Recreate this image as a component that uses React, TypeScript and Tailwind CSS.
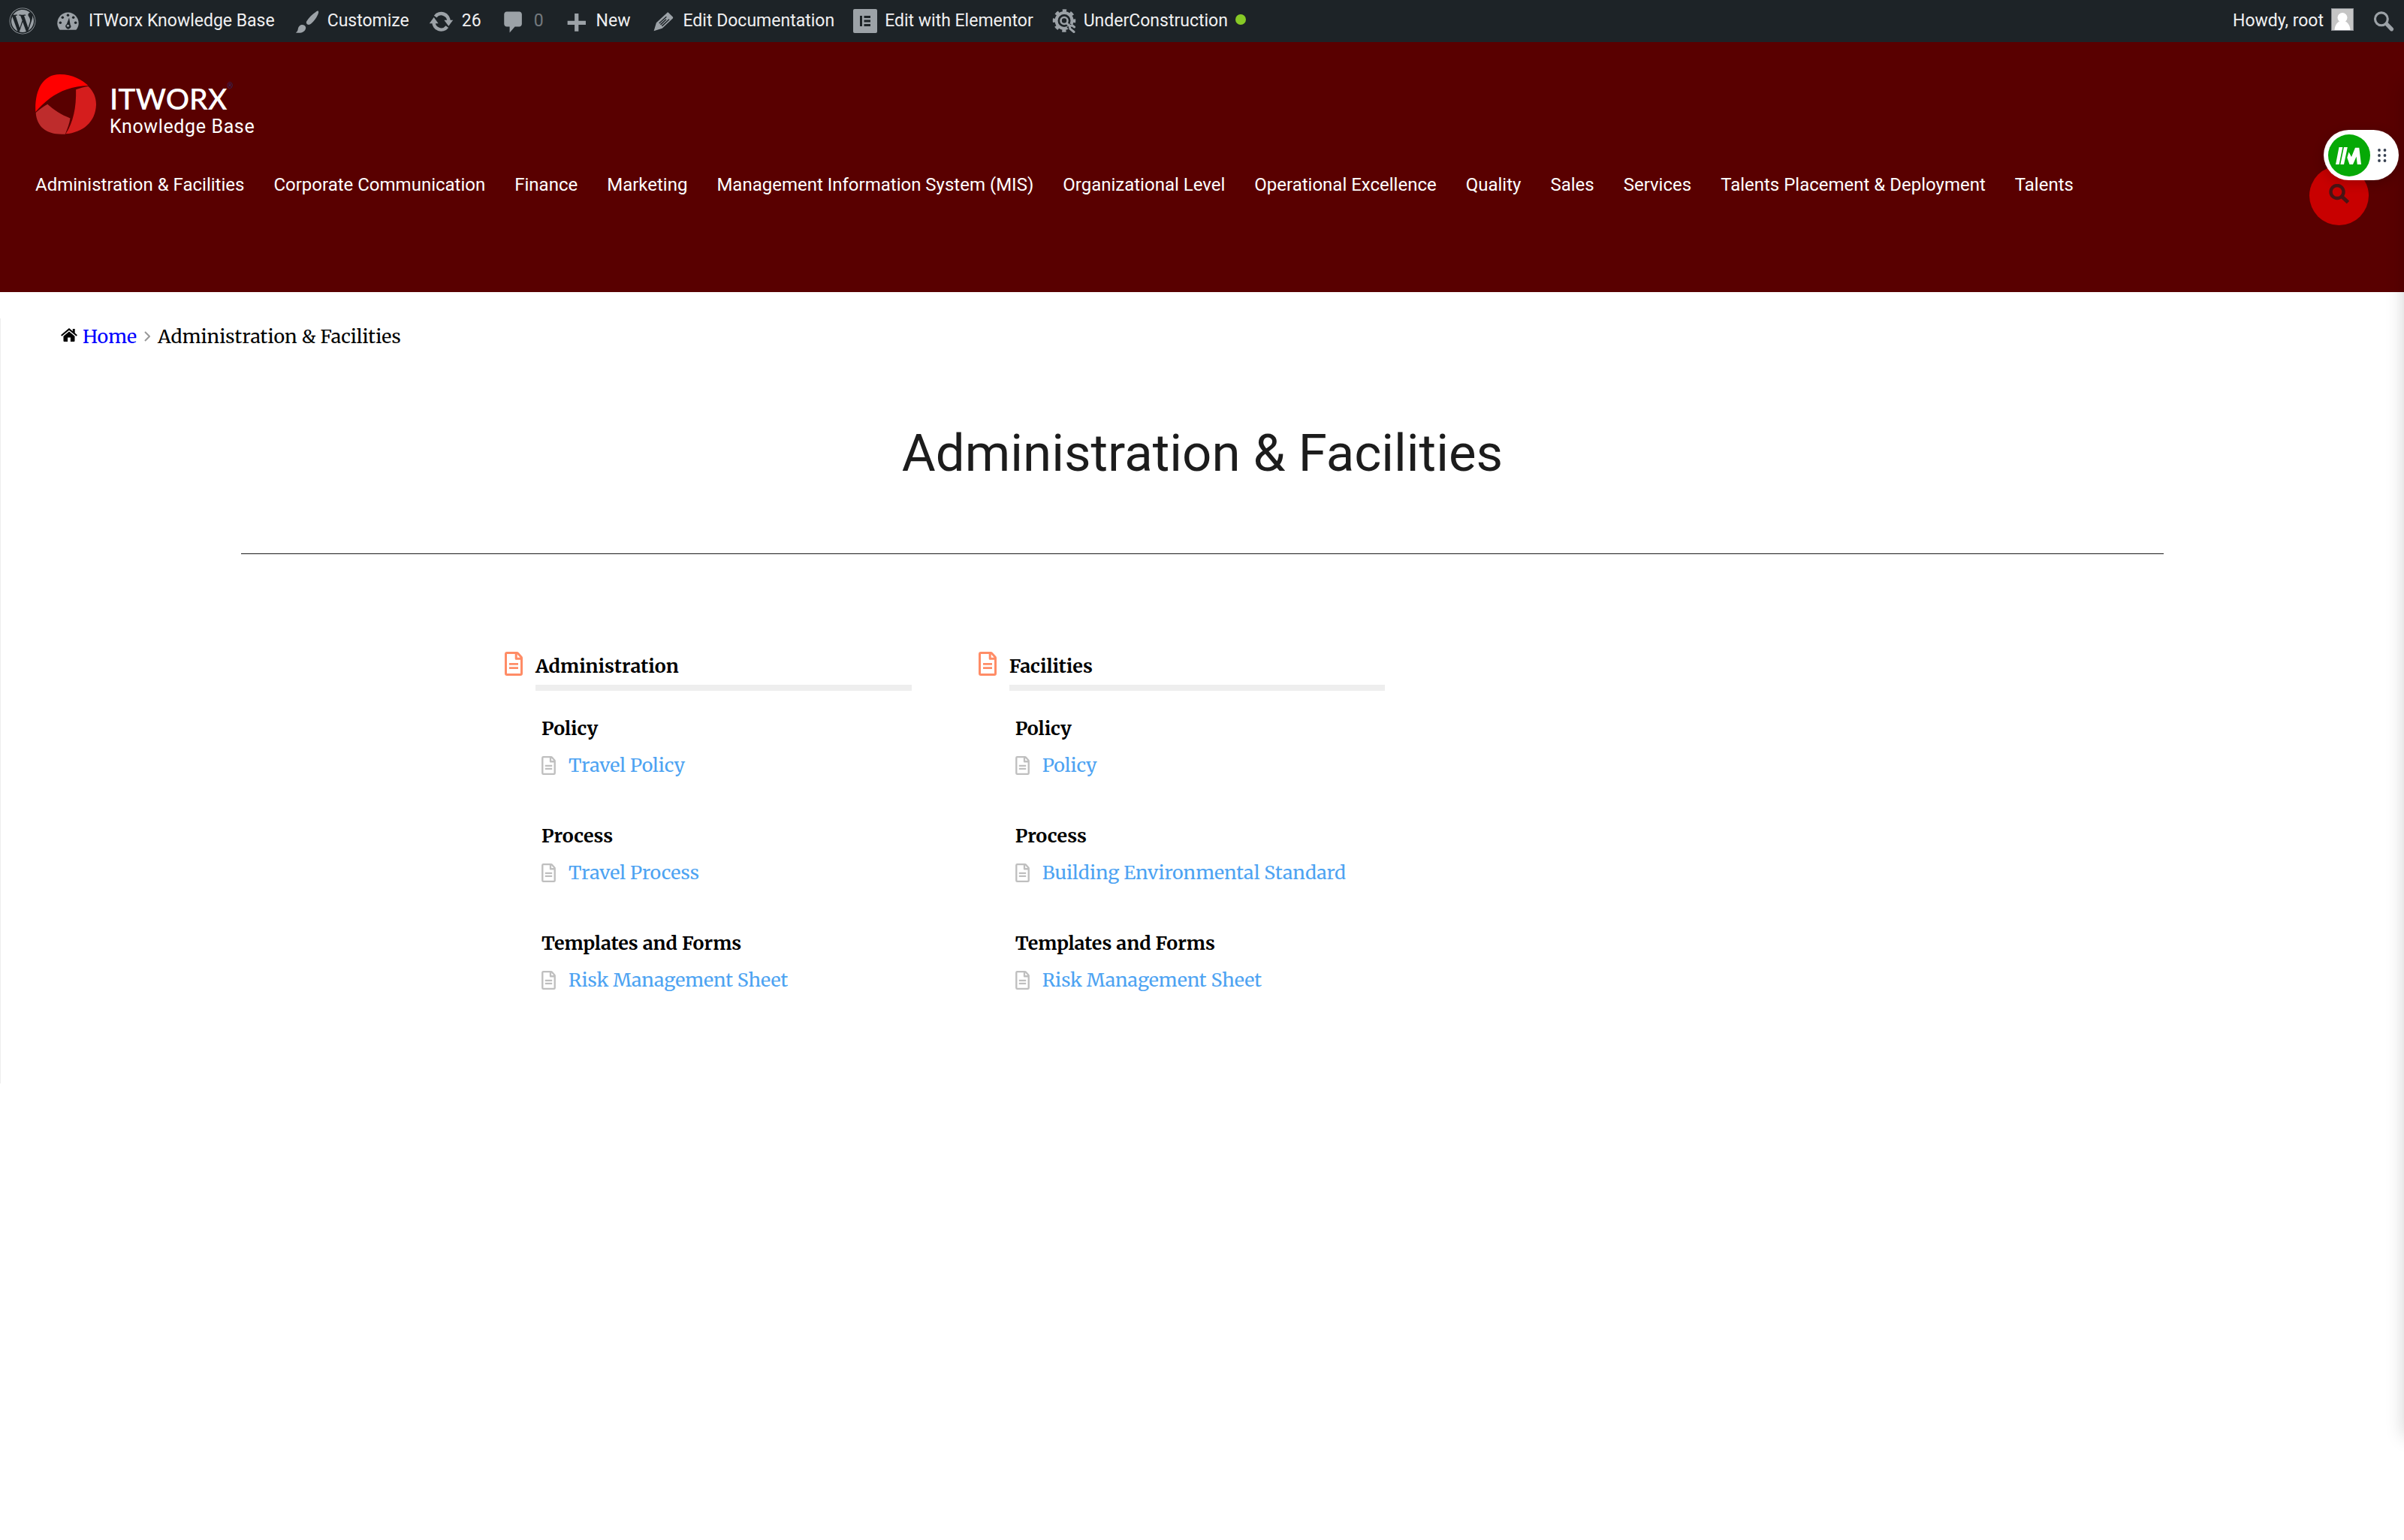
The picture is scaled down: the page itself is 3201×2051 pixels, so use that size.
import React from 'react';
import { FaWordpress } from 'react-icons/fa';

type IconProps = { className?: string };

const GaugeIcon = ({ className = '' }: IconProps) => (
  <svg viewBox="0 0 20 20" className={className} fill="currentColor" aria-hidden="true">
    <path d="M3.8 16.4h12.4c1.100-1.400 1.900-3 1.900-4.900 0-4.600-3.600-8.300-8.100-8.300s-8.100 3.700-8.100 8.300c0 1.900.8 3.500 1.900 4.900z" />
    <g fill="#1d2327">
      <circle cx="10" cy="5.300" r="1" />
      <circle cx="5.900" cy="7" r="1" />
      <circle cx="14.100" cy="7" r="1" />
      <circle cx="4.200" cy="11" r="1" />
      <circle cx="15.800" cy="11" r="1" />
      <path d="M10.900 7.200l.9 5.300a2 2 0 1 1-2.800-.4z" />
    </g>
    <circle cx="10" cy="13.300" r=".9" />
  </svg>
);

const BrushIcon = ({ className = '' }: IconProps) => (
  <svg viewBox="0 0 20 20" className={className} fill="currentColor" aria-hidden="true">
    <path d="M18.700 2.200c.5.500.2 1.500-.3 2.700-1.200 2.700-3.500 6-6 7.400-.7.400-1.500.3-2.200-.2-.6-.6-.8-1.400-.3-2.200 1.500-2.600 4.400-5.500 6.900-7.100.9-.6 1.500-1 1.900-.6z" />
    <path d="M8.900 13.700c.7 1 .3 2.400-.6 3.400-1.500 1.700-4.200 1.800-6.700 1.400 1.500-.8 1.500-1.900 1.800-3.200.4-1.400 1.300-2.400 2.700-2.700 1.100-.2 2.200.2 2.800 1.100z" />
  </svg>
);

const UpdateIcon = ({ className = '' }: IconProps) => (
  <svg viewBox="0 0 20 20" className={className} fill="currentColor" aria-hidden="true">
    <g fill="none" stroke="currentColor" strokeWidth="2.600">
      <path d="M5.500 6.300A5.700 5.700 0 0 1 15.700 10" />
      <path d="M14.500 14.100A5.700 5.700 0 0 1 4.300 10.400" />
    </g>
    <path d="M12.200 9h6.800l-3.400 4.600z" />
    <path d="M1 11.500h6.800L4.400 6.900z" />
  </svg>
);

const CommentIcon = ({ className = '' }: IconProps) => (
  <svg viewBox="0 0 20 20" className={className} fill="currentColor" aria-hidden="true">
    <path d="M5 2.500h9.500c1.100 0 2 .9 2 2V12c0 1.100-.9 2-2 2h-3.300l-4 4.600V14H5c-1.100 0-2-.9-2-2V4.500c0-1.100.9-2 2-2z" />
  </svg>
);

const PlusIcon = ({ className = '' }: IconProps) => (
  <svg viewBox="0 0 20 20" className={className} fill="currentColor" aria-hidden="true">
    <path d="M9.200 4h3v5.500h5.500v3h-5.500V17.500h-3v-5H3.800v-3h5.400z" />
  </svg>
);

const PencilIcon = ({ className = '' }: IconProps) => (
  <svg viewBox="0 0 20 20" className={className} aria-hidden="true">
    <path fill="currentColor" d="M13.300 3.400c.3-.3.800-.3 1.100 0l3.200 3.200c.3.300.3.800 0 1.100l-8 7.600-6.400 2 1.900-6.300z" />
    <path stroke="#1d2327" strokeWidth=".8" fill="none" d="M7.300 11.400l5.500-5M9.400 13.500l5.500-5.100M8.300 12.500l4.300-4.100" />
  </svg>
);

const ElementorIcon = ({ className = '' }: IconProps) => (
  <svg viewBox="0 0 32 32" className={className} aria-hidden="true">
    <rect width="32" height="32" rx="2" fill="currentColor" />
    <path fill="#1d2327" d="M9 9h3v14H9zM14.500 9H23v3h-8.500zM14.500 14.500H23v3h-8.500zM14.500 20H23v3h-8.500z" />
  </svg>
);

const GearIcon = ({ className = '' }: IconProps) => (
  <svg viewBox="0 0 32 32" className={className} fill="none" stroke="currentColor" aria-hidden="true">
    <circle cx="16" cy="15.500" r="10.500" strokeWidth="4" />
    <circle cx="16" cy="15.500" r="13.500" strokeWidth="3.500" strokeDasharray="5.300 5.300" strokeDashoffset="2.650" />
    <circle cx="16" cy="15.500" r="4.500" strokeWidth="2.600" />
    <path stroke="#1d2327" strokeWidth="7" d="M22 22l9 9" />
    <path strokeWidth="3" strokeLinecap="round" d="M19.500 19l3.500 3.500 1 4 5 4M23 22.500l4-.5 2.500 2" />
  </svg>
);

const DashSearchIcon = ({ className = '' }: IconProps) => (
  <svg viewBox="0 0 20 20" className={className} fill="none" stroke="currentColor" aria-hidden="true">
    <circle cx="8.500" cy="8.200" r="4.800" strokeWidth="1.800" />
    <path d="M12.500 12l3.800 3.900" strokeWidth="3" strokeLinecap="round" />
  </svg>
);

const SearchIcon = ({ className = '' }: IconProps) => (
  <svg viewBox="0 0 27 27" className={className} fill="none" stroke="currentColor" aria-hidden="true">
    <circle cx="11" cy="10.500" r="8.500" strokeWidth="4.400" />
    <path d="M17.500 17l8 7.500" strokeWidth="5" />
  </svg>
);

const LogoMark = ({ className = '' }: IconProps) => (
  <svg viewBox="141 117 244 241" className={className} aria-hidden="true">
    <path fill="#ff0000" d="M142 268C138 190 165 117 240 117c50 0 90 23 113 45-63 2-113 21-153 51-25 19-42 36-58 55z" />
    <path fill="#d51d1d" d="M304 178c16-6 31-10 49-13 22 20 32 45 32 73-2 72-55 112-122 118 30-46 43-106 41-178z" />
    <path fill="#be2c2c" d="M143 271c15-14 32-26 47-34 25 23 55 43 91 56-3 22-11 42-20 64-71 5-114-26-118-86z" />
  </svg>
);

const HomeIcon = ({ className = '' }: IconProps) => (
  <svg viewBox="0 0 22 18" className={className} fill="currentColor" aria-hidden="true">
    <path d="M11 4.500l7.500 6.300V17a1 1 0 0 1-1 1h-4.600v-5.500H9.100V18H4.500a1 1 0 0 1-1-1v-6.200z" />
    <path fill="none" stroke="currentColor" strokeWidth="2" d="M.7 10L11 1.400 21.300 10" />
    <path d="M15.800 1h2.900v6l-2.900-2.400z" />
  </svg>
);

const DocIcon = ({ className = '' }: IconProps) => (
  <svg viewBox="0 0 24 32" className={className} fill="none" stroke="currentColor" aria-hidden="true">
    <path
      strokeWidth="3"
      strokeLinejoin="round"
      d="M3 1.500h13.200q.8 0 1.300.5l4.500 5q.5.600.5 1.300V29q0 1.500-1.500 1.500H3q-1.500 0-1.500-1.500V3Q1.500 1.500 3 1.500zM15.200 1.600v7.700h7.200"
    />
    <path strokeWidth="2.900" d="M6 16.400h12M6 21.600h12" />
  </svg>
);

const PillLogo = ({ className = '' }: IconProps) => (
  <svg viewBox="0 0 56 56" className={className} aria-hidden="true">
    <circle cx="28" cy="28" r="28" fill="#06a906" />
    <path
      fill="#fff"
      d="M14.500 17h4.800l-4.700 23H10zM21 17h4.800L21 40h-4.700zM27.500 23.500L31 30l5-12.200h5.300L44 40h-5.200l-1.200-10.500L33 40h-4.500L25.300 31z"
    />
  </svg>
);

const adminItems = [
  { label: 'ITWorx Knowledge Base', Icon: GaugeIcon, size: 'size-[35px]' },
  { label: 'Customize', Icon: BrushIcon, size: 'size-[35px]' },
  { label: '26', Icon: UpdateIcon, size: 'size-[35px]' },
  { label: '0', Icon: CommentIcon, size: 'size-[35px]', dim: true },
  { label: 'New', Icon: PlusIcon, size: 'size-[35px]' },
  { label: 'Edit Documentation', Icon: PencilIcon, size: 'size-[35px]' },
  { label: 'Edit with Elementor', Icon: ElementorIcon, size: 'size-8' },
  { label: 'UnderConstruction', Icon: GearIcon, size: 'size-8', dot: true },
];

const navItems = [
  'Administration & Facilities',
  'Corporate Communication',
  'Finance',
  'Marketing',
  'Management Information System (MIS)',
  'Organizational Level',
  'Operational Excellence',
  'Quality',
  'Sales',
  'Services',
  'Talents Placement & Deployment',
  'Talents',
];

const categories = [
  {
    title: 'Administration',
    groups: [
      { name: 'Policy', article: 'Travel Policy' },
      { name: 'Process', article: 'Travel Process' },
      { name: 'Templates and Forms', article: 'Risk Management Sheet' },
    ],
  },
  {
    title: 'Facilities',
    groups: [
      { name: 'Policy', article: 'Policy' },
      { name: 'Process', article: 'Building Environmental Standard' },
      { name: 'Templates and Forms', article: 'Risk Management Sheet' },
    ],
  },
];

function AdminBar() {
  return (
    <div className="flex h-14 items-center justify-between bg-[#1d2327] text-[23px] leading-8 text-[#f0f0f1]">
      <div className="flex items-center gap-[25px] pl-3">
        <a href="#wordpress" aria-label="About WordPress" className="text-[#9ca2a7]">
          <FaWordpress className="size-9" />
        </a>
        {adminItems.map(({ label, Icon, size, dim, dot }) => (
          <a key={label} href="#admin" className="flex items-center gap-[10px] whitespace-nowrap">
            <span className="text-[#9ca2a7]">
              <Icon className={size} />
            </span>
            <span className={dim ? 'text-[#74797d]' : ''}>{label}</span>
            {dot && <span className="mb-1 size-[14px] rounded-full bg-[#87c926]" />}
          </a>
        ))}
      </div>
      <div className="flex items-center pr-[10px]">
        <a href="#profile" className="flex items-center gap-[10px] whitespace-nowrap">
          Howdy, root
          <svg viewBox="0 0 30 30" className="mb-[5px] size-[30px]" aria-hidden="true">
            <rect width="30" height="30" fill="#8c8f94" />
            <rect x="1" y="1" width="28" height="28" fill="#c5c5c5" />
            <circle cx="15" cy="12.500" r="6.500" fill="#fff" />
            <path d="M4.500 29c.5-7 4-11 8-12h5c4 1 7.500 5 8 12z" fill="#fff" />
          </svg>
        </a>
        <button type="button" aria-label="Search" className="ml-[22px] text-[#9ca2a7]">
          <DashSearchIcon className="size-[35px]" />
        </button>
      </div>
    </div>
  );
}

function SiteHeader() {
  return (
    <header className="bg-[#590000] px-[47px] pt-[43px] pb-[89px] text-white">
      <a href="#home" className="flex w-fit gap-[18px]">
        <LogoMark className="h-20 w-[81px]" />
        <span className="flex flex-col pt-3">
          <span className="flex items-start">
            <span className="font-['Lato',sans-serif] text-[39px] leading-10 font-semibold">ITWORX</span>
            <span className="text-[10px] leading-2 text-[#2b2b6b]">®</span>
          </span>
          <span className="text-[25px] leading-9 tracking-wide">Knowledge Base</span>
        </span>
      </a>
      <div className="mt-[34px] flex items-start justify-between">
        <nav className="flex flex-wrap gap-x-[39px] pt-[9px] text-[24px] leading-8">
          {navItems.map((item) => (
            <a key={item} href="#section" className="whitespace-nowrap">
              {item}
            </a>
          ))}
        </nav>
        <button
          type="button"
          aria-label="Search the site"
          className="flex size-[79px] shrink-0 items-center justify-center rounded-full bg-[#c80000] text-[#4a1414]"
        >
          <SearchIcon className="mb-1 size-[27px]" />
        </button>
      </div>
    </header>
  );
}

function FloatingWidget() {
  return (
    <div className="absolute top-[173px] right-[7px] flex h-[67px] w-[100px] items-center gap-[10px] rounded-full bg-white pl-[6px] shadow-[0_4px_16px_rgba(0,0,0,0.2)]">
      <button type="button" aria-label="Open assistant">
        <PillLogo className="block size-14" />
      </button>
      <svg viewBox="0 0 12 18" className="h-[18px] w-3" fill="#374151" aria-hidden="true">
        {[2, 9, 16].map((y) => (
          <React.Fragment key={y}>
            <circle cx="2" cy={y} r="1.900" />
            <circle cx="9.500" cy={y} r="1.900" />
          </React.Fragment>
        ))}
      </svg>
    </div>
  );
}

export default function App() {
  return (
    <div className="relative min-h-screen bg-white font-['Roboto',sans-serif]">
      <AdminBar />
      <SiteHeader />
      <main className="mt-[35px] border-l border-[#eeeeee] pt-2 pb-[122px] font-['Merriweather',serif] text-[25px] leading-8 text-black">
        <nav aria-label="Breadcrumb" className="flex items-center pl-20">
          <HomeIcon className="mr-[7px] mb-1 h-[18px] w-[22px]" />
          <a href="#home" className="text-[#0000ff]">
            Home
          </a>
          <svg viewBox="0 0 8 14" className="mx-[10px] h-[14px] w-2" fill="none" stroke="#999" strokeWidth="2" aria-hidden="true">
            <path d="M1 1l6 6-6 6" />
          </svg>
          <span>Administration &amp; Facilities</span>
        </nav>
        <h1 className="mt-[100px] text-center font-['Roboto',sans-serif] text-[69px] leading-20 text-[#1c1c1c]">
          Administration &amp; Facilities
        </h1>
        <hr className="mx-[10%] mt-[93px] border-t border-[#1c1c1c]" />
        <div className="mx-auto mt-[130px] grid w-3/5 grid-cols-3 pl-7">
          {categories.map((category) => (
            <section key={category.title} className="pr-[86px] pl-[3px]">
              <div className="flex items-start gap-[17px]">
                <DocIcon className="h-8 w-6 shrink-0 text-[#ff8c66]" />
                <h2 className="flex-1 border-b-8 border-[#eeeeee] pb-[6px] leading-[38px] font-bold">{category.title}</h2>
              </div>
              <div className="mt-[34px] flex flex-col gap-[62px] pl-[49px]">
                {category.groups.map((group) => (
                  <div key={group.name}>
                    <h3 className="font-bold">{group.name}</h3>
                    <a href="#article" className="mt-[17px] flex items-center gap-[17px] whitespace-nowrap text-[#4da3f2]">
                      <DocIcon className="h-[25px] w-[19px] shrink-0 text-[#bfbfbf]" />
                      {group.article}
                    </a>
                  </div>
                ))}
              </div>
            </section>
          ))}
        </div>
      </main>
      <div className="pointer-events-none fixed top-28 -right-10 bottom-[138px] w-10 shadow-[0_0_24px_rgba(0,0,0,0.18)]" />
      <FloatingWidget />
    </div>
  );
}
